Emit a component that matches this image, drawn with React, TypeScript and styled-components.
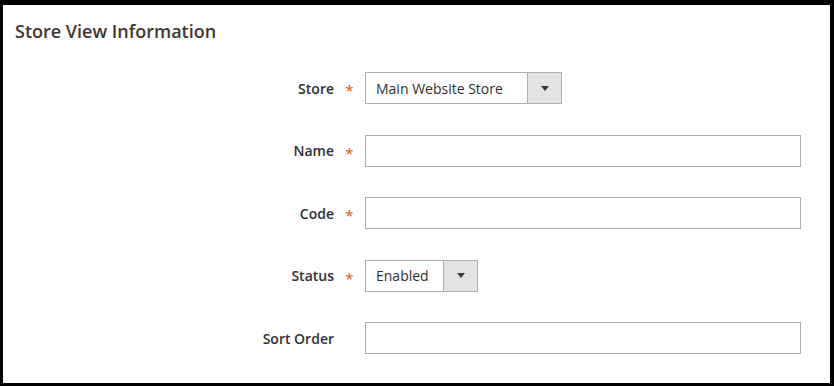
import { createGlobalStyle, styled } from "styled-components";

const GlobalStyle = createGlobalStyle`
  html, body {
    margin: 0;
    padding: 0;
    background: #000;
  }
  body {
    font-family: "Open Sans", "Liberation Sans", sans-serif;
  }
`;

type Field = {
  label: string;
  required?: boolean;
  kind: "select" | "input";
  value?: string;
  width?: number;
};

const fields: Field[] = [
  { label: "Store", required: true, kind: "select", value: "Main Website Store", width: 197 },
  { label: "Name", required: true, kind: "input" },
  { label: "Code", required: true, kind: "input" },
  { label: "Status", required: true, kind: "select", value: "Enabled", width: 113 },
  { label: "Sort Order", kind: "input" },
];

const App = () => {
  return (
    <>
      <GlobalStyle />
      <Frame>
        <Panel>
          <Title>Store View Information</Title>
          <Form>
            {fields.map((f) => (
              <Row key={f.label}>
                <Label>{f.label}</Label>
                <Star>{f.required ? "*" : ""}</Star>
                {f.kind === "select" ? (
                  <Select $w={f.width || 200}>
                    <SelectText>{f.value}</SelectText>
                    <Caret>
                      <svg width="8" height="5" viewBox="0 0 8 5">
                        <path d="M0 0 L8 0 L4 5 Z" fill="#41362f" />
                      </svg>
                    </Caret>
                  </Select>
                ) : (
                  <Input />
                )}
              </Row>
            ))}
          </Form>
        </Panel>
      </Frame>
    </>
  );
};

export default App;

const Frame = styled.div`
  width: 834px;
  height: 386px;
  padding: 5px 4px 3px 3px;
  box-sizing: border-box;
  background: #000;
`;

const Panel = styled.div`
  width: 100%;
  height: 100%;
  background: #fff;
  box-sizing: border-box;
  padding: 15px 0 0 12px;
`;

const Title = styled.div`
  font-size: 18px;
  font-weight: 600;
  color: #41362f;
  line-height: 22px;
`;

const Form = styled.div`
  display: flex;
  flex-direction: column;
  gap: 30.5px;
  margin-top: 30px;
`;

const Row = styled.div`
  display: flex;
  align-items: center;
  height: 32px;
`;

const Label = styled.div`
  width: 319px;
  text-align: right;
  font-size: 14px;
  font-weight: 600;
  color: #303030;
`;

const Star = styled.div`
  width: 31px;
  text-align: center;
  font-size: 15px;
  color: #eb5202;
  padding-top: 4px;
`;

const Select = styled.div<{ $w: number }>`
  width: ${(p) => p.$w}px;
  height: 32px;
  box-sizing: border-box;
  border: 1px solid #adadad;
  display: flex;
  align-items: stretch;
`;

const SelectText = styled.div`
  flex: 1;
  display: flex;
  align-items: center;
  padding-left: 10px;
  font-size: 14px;
  color: #303030;
`;

const Caret = styled.div`
  width: 33px;
  background: #e3e3e3;
  border-left: 1px solid #adadad;
  display: flex;
  align-items: center;
  justify-content: center;
`;

const Input = styled.div`
  width: 436px;
  height: 32px;
  box-sizing: border-box;
  border: 1px solid #adadad;
  background: #fff;
`;
